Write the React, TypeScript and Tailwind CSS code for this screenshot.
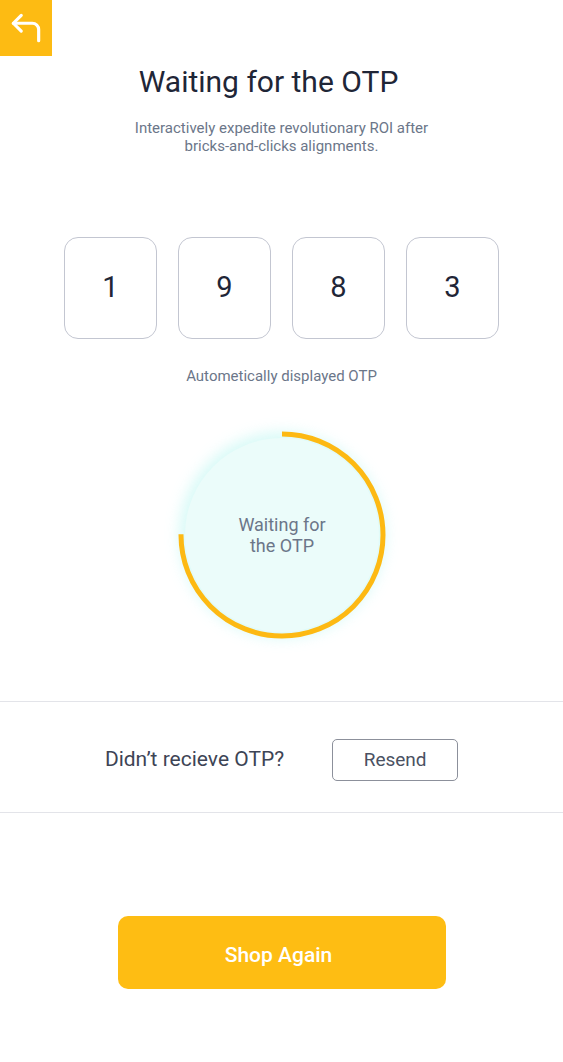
import { CornerUpLeft } from "lucide-react";

const digits = ["1", "9", "8", "3"];

function OtpRing() {
	const r = 101;
	const c = 2 * Math.PI * r;
	return (
		<div className="relative w-[220px] h-[220px] flex items-center justify-center">
			<div className="w-[194px] h-[194px] rounded-full bg-[#ebfcfa] shadow-[0_0_14px_6px_rgba(200,248,243,0.7)] flex items-center justify-center">
				<p className="text-[18px] leading-[21px] text-[#6b7689] text-center">
					Waiting for
					<br />
					the OTP
				</p>
			</div>
			<svg
				className="absolute inset-0"
				width="220"
				height="220"
				viewBox="0 0 220 220"
			>
				<circle
					cx="110"
					cy="110"
					r={r}
					fill="none"
					stroke="#fdb913"
					strokeWidth="5"
					strokeDasharray={`${c * 0.75} ${c}`}
					transform="rotate(-90 110 110)"
				/>
			</svg>
		</div>
	);
}

export default function App() {
	return (
		<div
			className="w-[563px] min-h-[1062px] bg-white flex flex-col"
			style={{ fontFamily: "Roboto, 'Liberation Sans', sans-serif" }}
		>
			<div className="w-[52px] h-14 bg-[#fdbb13] flex items-center justify-center">
				<CornerUpLeft className="w-[38px] h-[38px] text-white" strokeWidth={2} />
			</div>

			<h1 className="mt-2 pr-[26px] text-center text-[30px] leading-9 text-[#1f2637]">
				Waiting for the OTP
			</h1>
			<p className="mt-[19px] text-center text-[15px] leading-[18px] text-[#6b7689]">
				Interactively expedite revolutionary ROI after
				<br />
				bricks-and-clicks alignments.
			</p>

			<div className="mt-[82px] flex justify-center gap-[21px]">
				{digits.map((d, i) => (
					<div
						key={i}
						className="w-[93px] h-[102px] rounded-[14px] border border-[#c3c6d1] flex items-center justify-center text-[29px] text-[#1f2637]"
					>
						{d}
					</div>
				))}
			</div>

			<p className="mt-[27px] text-center text-[15px] leading-5 text-[#6b7689]">
				Autometically displayed OTP
			</p>

			<div className="mt-[39px] flex justify-center pl-px">
				<OtpRing />
			</div>

			<div className="mt-[56px] h-[112px] pt-[6px] border-y border-[#e3e4e9] flex items-center justify-center gap-12">
				<span className="text-[21px] text-[#3d4455]">Didn’t recieve OTP?</span>
				<button className="w-[126px] h-[42px] rounded-[5px] border border-[#8c909b] text-[19px] text-[#4a5162]">
					Resend
				</button>
			</div>

			<div className="mt-[103px] flex justify-center">
				<button className="w-[328px] h-[73px] pt-[6px] pr-[6px] rounded-[10px] bg-[#febd13] text-white text-[21px] font-medium">
					Shop Again
				</button>
			</div>
		</div>
	);
}
